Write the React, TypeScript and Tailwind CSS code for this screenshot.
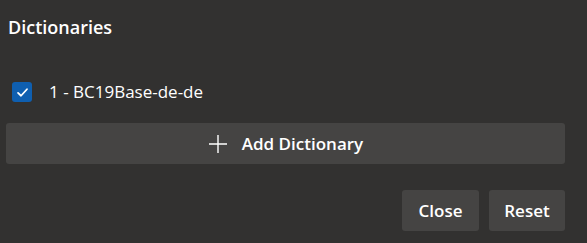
const App = () => {
  return (
    <div
      className="w-[587px] h-[243px] bg-[#323130] text-white flex flex-col"
      style={{ fontFamily: '"Open Sans", "Noto Sans", sans-serif' }}
    >
      <h1 className="pl-2 pt-[15px] text-[18px] font-semibold leading-6">Dictionaries</h1>
      <label className="flex items-center mt-[43px] pl-3 h-5">
        <span className="w-5 h-5 rounded-[3px] bg-[#0f5fb0] flex items-center justify-center">
          <svg width="13" height="13" viewBox="0 0 16 16" fill="none">
            <path d="M2.5 8.5 L6.2 12 L13.5 4" stroke="white" strokeWidth="2.2" strokeLinecap="round" strokeLinejoin="round" />
          </svg>
        </span>
        <span className="ml-[17px] text-[17px] leading-5">1 - BC19Base-de-de</span>
      </label>
      <button className="mt-[21px] ml-[6px] w-[559px] h-[41px] rounded-[3px] bg-[#454443] flex items-center justify-center gap-[14px]">
        <svg width="20" height="20" viewBox="0 0 20 20" fill="none">
          <path d="M10 1 V19 M1 10 H19" stroke="white" strokeWidth="1.4" />
        </svg>
        <span className="text-[17px] font-semibold">Add Dictionary</span>
      </button>
      <div className="mt-[26px] pr-[22px] flex justify-end gap-[10px]">
        <button className="w-[77px] h-[41px] rounded-[3px] bg-[#454443] text-[17px] font-semibold">Close</button>
        <button className="w-[76px] h-[41px] rounded-[3px] bg-[#454443] text-[17px] font-semibold">Reset</button>
      </div>
    </div>
  );
};

export default App;
